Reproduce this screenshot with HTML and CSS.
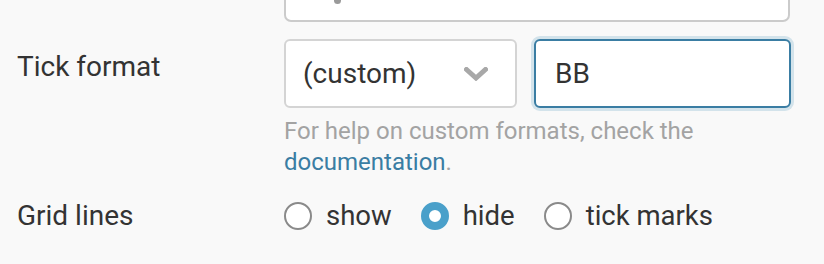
FILE: index.html
```html
<!DOCTYPE html>
<html>
<head>
<meta charset="utf-8">
<link rel="stylesheet" href="styles.css">
</head>
<body>
<div class="page">
  <div class="top-box"><span class="top-glyph"></span></div>

  <div class="row row-format">
    <div class="label label-format">Tick format</div>
    <div class="controls">
      <div class="field-pair">
        <div class="select">
          <span class="select-text">(custom)</span>
          <svg class="chevron" width="24" height="14" viewBox="0 0 24 14"><path d="M2.5 2.5 L12 11 L21.5 2.5" fill="none" stroke="#a8a8a8" stroke-width="5" stroke-linecap="square"/></svg>
        </div>
        <div class="input">BB</div>
      </div>
      <p class="help">For help on custom formats, check the <a class="doc-link">documentation</a>.</p>
    </div>
  </div>

  <div class="row row-grid">
    <div class="label">Grid lines</div>
    <div class="radios">
      <label class="radio"><span class="dot"></span>show</label>
      <label class="radio"><span class="dot dot-on"></span>hide</label>
      <label class="radio"><span class="dot"></span>tick marks</label>
    </div>
  </div>
</div>
</body>
</html>
```

FILE: styles.css
```css
html, body {
  margin: 0;
  padding: 0;
  background: #f9f9f9;
}
body {
  font-family: Roboto, "Noto Sans", sans-serif;
  color: #333;
  font-size: 28px;
  overflow: hidden;
}
.page {
  display: flex;
  flex-direction: column;
}
.top-box {
  margin-left: 284px;
  width: 454px;
  height: 38px;
  margin-top: -20px;
  background: #fff;
  border: 2px solid #cbcbcb;
  border-radius: 7px;
  display: flex;
  align-items: flex-end;
  padding-left: 48px;
  box-sizing: content-box;
}
.top-glyph {
  display: block;
  width: 7px;
  height: 6px;
  margin-bottom: 16px;
  border-radius: 0 0 4px 4px;
  background: #9a9a9a;
}
.row {
  display: flex;
}
.label {
  width: 267px;
  padding-left: 17px;
  line-height: 40px;
  flex: none;
}
.label-format {
  padding-top: 8px;
}
.row-format {
  margin-top: 17px;
}
.controls {
  width: 507px;
}
.field-pair {
  display: flex;
  gap: 17px;
}
.select {
  box-sizing: border-box;
  width: 233px;
  height: 69px;
  background: #fff;
  border: 2px solid #d4d4d4;
  border-radius: 6px;
  display: flex;
  align-items: center;
  justify-content: space-between;
  padding: 0 27px 0 17px;
}
.chevron {
  display: block;
  margin-top: 1px;
}
.input {
  box-sizing: border-box;
  width: 257px;
  height: 69px;
  background: #fff;
  border: 2px solid #3a7da3;
  border-radius: 6px;
  box-shadow: 0 0 0 3px #d3e3eb;
  display: flex;
  align-items: center;
  padding-left: 19px;
}
.help {
  margin: 8px 0 0;
  font-size: 24px;
  line-height: 31px;
  color: #a3a3a3;
}
.doc-link {
  color: #3a7da3;
  text-decoration: none;
}
.row-grid {
  margin-top: 18px;
}
.radios {
  display: flex;
  align-items: center;
  height: 40px;
  line-height: 40px;
  font-size: 27.5px;
}
.radio {
  display: flex;
  align-items: center;
  margin-right: 29px;
}
.dot {
  box-sizing: border-box;
  width: 28px;
  height: 28px;
  border-radius: 50%;
  border: 2px solid #8a8a8a;
  background: #fff;
  margin-right: 14px;
  flex: none;
}
.dot-on {
  border: 8.5px solid #4aa0ca;
}
```
